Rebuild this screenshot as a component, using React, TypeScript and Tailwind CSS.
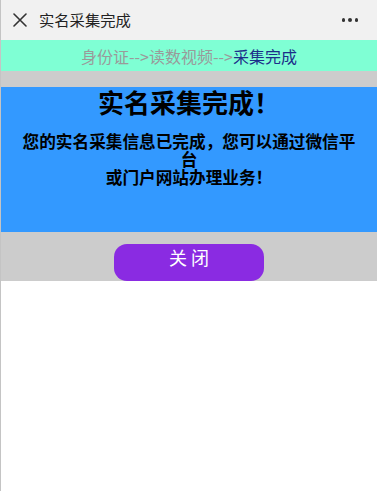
import React from "react";

export default function App() {
  const font = { fontFamily: '"Noto Sans CJK SC", "Noto Sans", sans-serif' };
  return (
    <div className="w-[377px] h-[491px] bg-white border-l border-[#c4c4c4] overflow-hidden" style={font}>
      {/* header */}
      <div className="h-[40px] bg-[#f1f1f1] flex items-center pl-[12px] pr-[19px]">
        <svg width="14" height="14" viewBox="0 0 14 14" className="mr-[12px]">
          <path d="M1 1 L13 13 M13 1 L1 13" stroke="#333" strokeWidth="1.6" strokeLinecap="round" />
        </svg>
        <span className="text-[15.3px] text-[#222] leading-none">实名采集完成</span>
        <div className="ml-auto flex gap-[3px] items-center">
          <span className="w-[3.5px] h-[3.5px] rounded-full bg-[#333]" />
          <span className="w-[3.5px] h-[3.5px] rounded-full bg-[#333]" />
          <span className="w-[3.5px] h-[3.5px] rounded-full bg-[#333]" />
        </div>
      </div>
      {/* steps */}
      <div className="h-[31px] bg-[#7fffd4] flex items-center justify-center text-[16px] leading-none">
        <span className="text-[#9a9a9a]">身份证--&gt;读数视频--&gt;</span>
        <span className="text-[#1c2e8a]">采集完成</span>
      </div>
      <div className="h-[16px] bg-[#cccccc]" />
      {/* blue panel */}
      <div className="h-[145px] bg-[#3399ff] flex flex-col items-center text-black">
        <div className="text-[26px] font-bold leading-[30px] text-center">实名采集完成！</div>
        <div className="mt-[16px] w-[340px] text-center text-[16.65px] font-bold leading-[17.8px]">
          您的实名采集信息已完成，您可以通过微信平台
          <br />
          或门户网站办理业务！
        </div>
      </div>
      {/* button area */}
      <div className="h-[49px] bg-[#cccccc] flex justify-center pt-[12px]">
        <button className="w-[150px] h-[37px] rounded-[13px] bg-[#8a2be2] text-white text-[18px] leading-[26px] tracking-[4px] pl-[4px] flex justify-center items-start">
          关闭
        </button>
      </div>
    </div>
  );
}
